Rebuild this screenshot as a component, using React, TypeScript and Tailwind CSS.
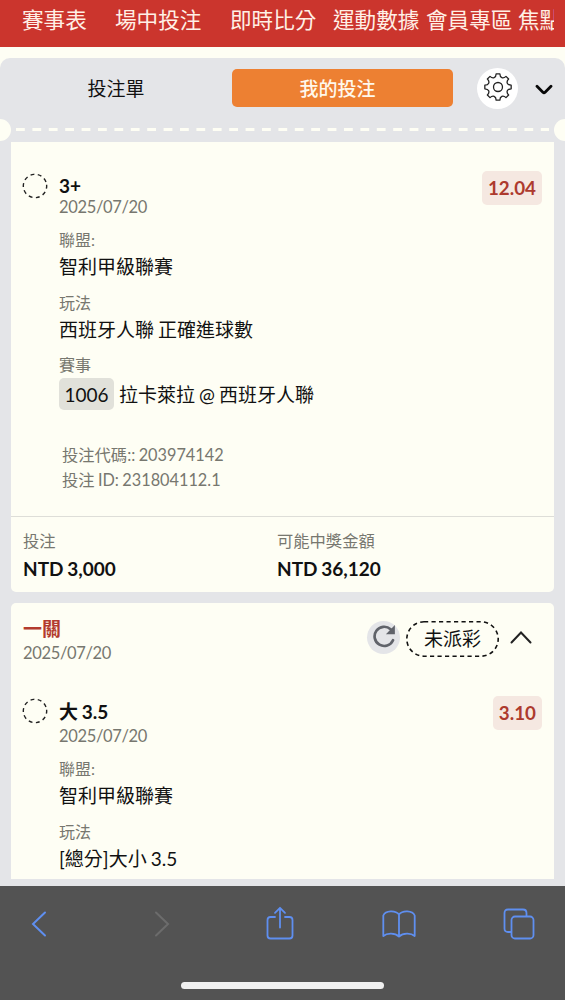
import React from "react";

function Field({ label, value, className }: { label: string; value: React.ReactNode; className: string }) {
  return (
    <div className={className}>
      <div className="h-5 text-[16px] leading-5 text-[#77776f]">{label}</div>
      <div className="mt-[3px] pt-px text-[19px] leading-[25px]">{value}</div>
    </div>
  );
}

function PendingMark() {
  return (
    <svg className="size-[26px] shrink-0" viewBox="0 0 26 26" fill="none" stroke="#222" strokeWidth="1.4">
      <circle cx="13" cy="13" r="11.7" strokeDasharray="3.9 3.45" transform="rotate(-6 13 13)" />
    </svg>
  );
}

function Odds({ children }: { children: React.ReactNode }) {
  return (
    <span className="flex h-[34px] items-center rounded-[5px] bg-[#f5e8e1] px-[6px] text-[18.8px] font-bold text-[#ad3a2e]">
      {children}
    </span>
  );
}

function polar(angle: number, radius: number) {
  const rad = (angle * Math.PI) / 180;
  return `${(15 + radius * Math.sin(rad)).toFixed(2)} ${(15 - radius * Math.cos(rad)).toFixed(2)}`;
}

const gearPath =
  [0, 45, 90, 135, 180, 225, 270, 315]
    .map(
      (a, i) =>
        `${i === 0 ? "M" : "L"}${polar(a - 8, 13.3)}L${polar(a + 8, 13.3)}C${polar(a + 12, 9.3)} ${polar(a + 33, 9.3)} ${polar(a + 37, 13.3)}`,
    )
    .join("") + "Z";

const nav = [
  { label: "賽事表", width: "w-[93px]" },
  { label: "場中投注", width: "w-[115px]" },
  { label: "即時比分", width: "w-[103px]" },
  { label: "運動數據", width: "w-[93px]" },
  { label: "會員專區", width: "w-[92px]" },
];

export default function App() {
  return (
    <div className="flex h-[1000px] w-[565px] flex-col overflow-hidden bg-[#fefef4] font-['Lato','Noto_Sans_CJK_TC',sans-serif] text-[#111] [word-spacing:-0.8px]">
      <header className="flex h-[47px] shrink-0 bg-[#cb352d] pl-[22px] text-[21.6px] leading-[40px] text-[#fff0e6]">
        {nav.map((n) => (
          <span key={n.label} className={`${n.width} shrink-0 whitespace-nowrap`}>
            {n.label}
          </span>
        ))}
        <span className="w-[36px] shrink-0 overflow-hidden whitespace-nowrap">焦點</span>
      </header>

      <main className="mt-[11px] flex h-[828px] shrink-0 flex-col rounded-t-[10px] bg-[#e4e5e8]">
        <div className="flex h-[60px] shrink-0 items-center">
          <button className="w-[232px] pt-[2px] text-center text-[19px]">投注單</button>
          <button className="h-[38px] w-[221px] rounded-[5px] bg-[#ed8032] pt-[2px] text-[19px] font-medium text-[#fff8ec]">
            <span className="mr-[10px]">我的投注</span>
          </button>
          <button className="ml-6 flex size-[41px] items-center justify-center rounded-full bg-white">
            <svg className="-mt-[3px] size-[30px]" viewBox="0 0 30 30" fill="none" stroke="#222" strokeWidth="1.3" strokeLinejoin="round">
              <path d={gearPath} />
              <circle cx="15" cy="15" r="4.5" />
            </svg>
          </button>
          <svg className="mt-[2px] ml-[17px] h-[11px] w-[18px]" viewBox="0 0 18 11" fill="none" stroke="#080808" strokeWidth="2.8" strokeLinecap="round" strokeLinejoin="round">
            <path d="M2 2.3L7.9 8.2Q9 9.2 10.1 8.2L16 2.3" />
          </svg>
        </div>

        <div className="-mt-px flex h-[25px] shrink-0 items-center justify-between">
          <span className="h-[22px] w-[11px] rounded-r-full bg-[#fefef4]" />
          <svg className="h-[3px] w-[533px]" viewBox="0 0 533 3">
            <path d="M0 1.5H533" stroke="#fefef4" strokeWidth="3" strokeDasharray="8.8 7.6" />
          </svg>
          <span className="h-[22px] w-[11px] rounded-l-full bg-[#fefef4]" />
        </div>

        <section className="mx-[11px] h-[450px] shrink-0 rounded-b-[5px] bg-[#fefef4]">
          <div className="flex h-[375px] items-start border-b border-[#deded8] pr-3 pl-[11px]">
            <div className="pt-[31px]">
              <PendingMark />
            </div>
            <div className="ml-[11px] flex-1 pt-[32px]">
              <div className="text-[19px] leading-6 font-bold">3+</div>
              <div className="text-[16.5px] leading-[18px] tracking-[-0.35px] text-[#77776f]">2025/07/20</div>
              <Field className="mt-[14px]" label="聯盟:" value="智利甲級聯賽" />
              <Field className="mt-[14px]" label="玩法" value="西班牙人聯 正確進球數" />
              <div className="mt-[13px] text-[16px] leading-5 text-[#77776f]">賽事</div>
              <div className="mt-[3px] flex h-8 items-center text-[19px]">
                <span className="mr-[5px] flex h-8 w-[55px] items-center justify-center rounded-[5px] bg-[#e1e1da] pt-[2px]">1006</span>
                <span className="pt-[2px]">拉卡萊拉 @ 西班牙人聯</span>
              </div>
              <div className="mt-[32px] ml-[3px] text-[16.3px] leading-[25px] text-[#77776f]">
                <div>投注代碼:: 203974142</div>
                <div>投注 ID: 231804112.1</div>
              </div>
            </div>
            <div className="pt-[29px]">
              <Odds>12.04</Odds>
            </div>
          </div>
          <div className="flex pt-[14px] pl-3">
            <div className="w-[254px]">
              <div className="text-[16.3px] leading-5 text-[#77776f]">投注</div>
              <div className="mt-[6px] text-[19px] leading-6 font-bold">NTD 3,000</div>
            </div>
            <div>
              <div className="text-[16.3px] leading-5 text-[#77776f]">可能中獎金額</div>
              <div className="mt-[6px] text-[19px] leading-6 font-bold">NTD 36,120</div>
            </div>
          </div>
        </section>

        <section className="mx-[11px] mt-[11px] h-[276px] shrink-0 rounded-t-[5px] bg-[#fefef4]">
          <div className="flex h-[92px] items-start pl-3">
            <div className="flex-1 pt-[14px]">
              <div className="text-[19px] leading-6 font-bold text-[#b33b2e]">一關</div>
              <div className="mt-[3px] text-[16.5px] leading-[18px] tracking-[-0.35px] text-[#77776f]">2025/07/20</div>
            </div>
            <div className="flex items-center pt-[18px] pr-[22px]">
              <span className="-mt-[4px] flex size-[33px] items-center justify-center rounded-full bg-[#e4e5e8]">
                <svg className="-mt-[3px] size-[24px]" viewBox="0 0 24 24" fill="none">
                  <path d="M18.6 5.2A9.6 9.6 0 1 0 21 16.2" stroke="#60636a" strokeWidth="2.7" strokeLinecap="round" />
                  <path d="M22.9 1V10.2H13.9Z" fill="#60636a" />
                </svg>
              </span>
              <svg className="ml-[6px] h-9 w-[93px]" viewBox="0 0 93 36" fill="none">
                <rect x=".8" y=".8" width="91.4" height="34.4" rx="17.2" stroke="#111" strokeWidth="1.6" strokeDasharray="4.2 3.3" />
                <text x="46.5" y="25" textAnchor="middle" fill="#111" fontSize="19">未派彩</text>
              </svg>
              <svg className="-mt-[4px] ml-[11px] h-[13px] w-[22px]" viewBox="0 0 22 13" fill="none" stroke="#222" strokeWidth="2" strokeLinecap="round">
                <path d="M1.5 11.5L11 1.5L20.5 11.5" />
              </svg>
            </div>
          </div>
          <div className="flex items-start pr-3 pl-[11px]">
            <div className="pt-[3px]">
              <PendingMark />
            </div>
            <div className="ml-[11px] flex-1 pt-[5px]">
              <div className="text-[19px] leading-6 font-bold">大 3.5</div>
              <div className="mt-[3px] text-[16.5px] leading-[18px] tracking-[-0.35px] text-[#77776f]">2025/07/20</div>
              <Field className="mt-[14px]" label="聯盟:" value="智利甲級聯賽" />
              <Field className="mt-[14px]" label="玩法" value="[總分]大小 3.5" />
            </div>
            <div className="pt-px">
              <Odds>3.10</Odds>
            </div>
          </div>
        </section>
      </main>

      <footer className="flex h-[114px] shrink-0 flex-col items-center bg-[#535353]">
        <div className="mt-[18px] flex h-[40px] w-full items-center pl-[31px] text-[#5f8ff0]">
          <svg className="h-[26px] w-[16px]" viewBox="0 0 16 26" fill="none" stroke="currentColor" strokeWidth="2" strokeLinecap="round">
            <path d="M14 1.5L2 13L14 24.5" />
          </svg>
          <svg className="ml-[107px] h-[26px] w-[16px] text-[#6c6c6c]" viewBox="0 0 16 26" fill="none" stroke="currentColor" strokeWidth="2" strokeLinecap="round">
            <path d="M2 1.5L14 13L2 24.5" />
          </svg>
          <svg className="-mt-[2px] ml-[96px] h-[34px] w-[28px]" viewBox="0 0 28 34" fill="none" stroke="currentColor" strokeWidth="1.8" strokeLinecap="round" strokeLinejoin="round">
            <path d="M9 11H4.5Q1.5 11 1.5 14V29.5Q1.5 32.5 4.5 32.5H23.5Q26.5 32.5 26.5 29.5V14Q26.5 11 23.5 11H19M14 21.5V1.8M9 6.8L14 1.8L19 6.8" />
          </svg>
          <svg className="ml-[88px] h-[30px] w-[34px]" viewBox="0 0 34 30" fill="none" stroke="currentColor" strokeWidth="1.8" strokeLinecap="round" strokeLinejoin="round">
            <path d="M17 5.5C13.5 1 3.5 1.3 1.3 6.5V27C5 23.7 13 23.7 17 27.5C21 23.7 29 23.7 32.7 27V6.5C30.5 1.3 20.5 1 17 5.5ZM17 5.5V27" />
          </svg>
          <svg className="ml-[87px] h-[32px] w-[32px]" viewBox="0 0 32 32" fill="none" stroke="currentColor" strokeWidth="1.8">
            <rect x="8.5" y="8.5" width="22" height="22" rx="3.5" />
            <path d="M8.5 24H5Q1.5 24 1.5 20.5V5Q1.5 1.5 5 1.5H20Q23.5 1.5 23.5 5V8.5" />
          </svg>
        </div>
        <div className="mt-[38px] h-[7px] w-[203px] rounded-full bg-[#f0f0f0]" />
      </footer>
    </div>
  );
}
